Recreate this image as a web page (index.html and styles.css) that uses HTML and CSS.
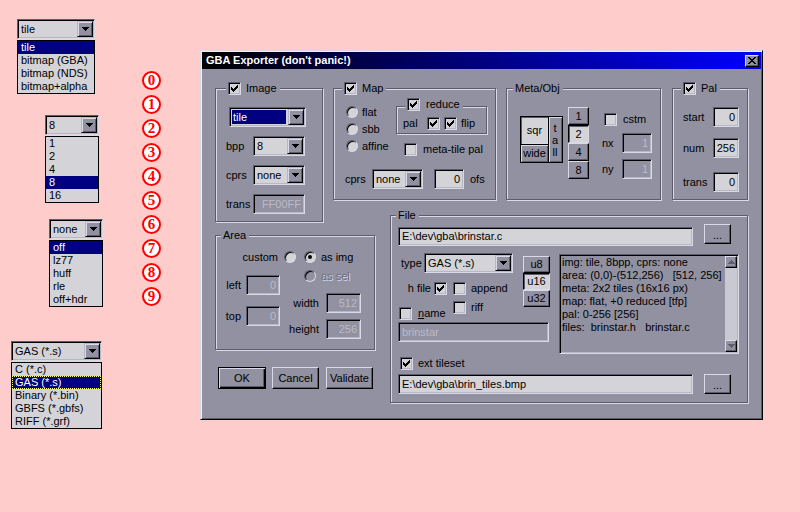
FILE: index.html
```html
<!DOCTYPE html>
<html lang="en">
<head>
<meta charset="utf-8">
<title>GBA Exporter</title>
<link rel="stylesheet" href="styles.css">
</head>
<body>

<div class="pop pop-tile">
  <div class="combo"><span class="cv">tile</span><span class="cbtn"><svg width="7" height="4" viewBox="0 0 7 4"><path d="M0 0h7v1h-1v1h-1v1h-1v1h-1v-1h-1v-1h-1v-1h-1z"/></svg></span></div>
  <ul class="list">
    <li class="sel">tile</li><li>bitmap (GBA)</li><li>bitmap (NDS)</li><li>bitmap+alpha</li>
  </ul>
</div>

<div class="pop pop-bpp">
  <div class="combo"><span class="cv">8</span><span class="cbtn"><svg width="7" height="4" viewBox="0 0 7 4"><path d="M0 0h7v1h-1v1h-1v1h-1v1h-1v-1h-1v-1h-1v-1h-1z"/></svg></span></div>
  <ul class="list">
    <li>1</li><li>2</li><li>4</li><li class="sel">8</li><li>16</li>
  </ul>
</div>

<div class="pop pop-cprs">
  <div class="combo"><span class="cv">none</span><span class="cbtn"><svg width="7" height="4" viewBox="0 0 7 4"><path d="M0 0h7v1h-1v1h-1v1h-1v1h-1v-1h-1v-1h-1v-1h-1z"/></svg></span></div>
  <ul class="list">
    <li class="sel">off</li><li>lz77</li><li>huff</li><li>rle</li><li>off+hdr</li>
  </ul>
</div>

<div class="pop pop-type">
  <div class="combo"><span class="cv">GAS (*.s)</span><span class="cbtn"><svg width="7" height="4" viewBox="0 0 7 4"><path d="M0 0h7v1h-1v1h-1v1h-1v1h-1v-1h-1v-1h-1v-1h-1z"/></svg></span></div>
  <ul class="list">
    <li>C (*.c)</li><li class="sel focus">GAS (*.s)</li><li>Binary (*.bin)</li><li>GBFS (*.gbfs)</li><li>RIFF (*.grf)</li>
  </ul>
</div>

<div class="marks">
  <span class="mark">0</span><span class="mark">1</span><span class="mark">2</span><span class="mark">3</span><span class="mark">4</span>
  <span class="mark">5</span><span class="mark">6</span><span class="mark">7</span><span class="mark">8</span><span class="mark">9</span>
</div>

<div class="dialog">
  <div class="titlebar">
    <span>GBA Exporter (don't panic!)</span>
    <span class="xbtn"><svg width="8" height="7" viewBox="0 0 8 7"><path d="M0 0h2v1h-2zM6 0h2v1h-2zM1 1h2v1h-2zM5 1h2v1h-2zM2 2h4v1h-4zM3 3h2v1h-2zM2 4h4v1h-4zM1 5h2v1h-2zM5 5h2v1h-2zM0 6h2v1h-2zM6 6h2v1h-2z"/></svg></span>
  </div>

  <div class="dbody">

    <section class="group g-image">
      <div class="legend lg-image"><span class="chk"><svg width="11" height="11" viewBox="0 0 11 11"><path d="M8 2h1v1h-1zM7 3h2v1h-2zM2 4h1v1h-1zM6 4h3v1h-3zM2 5h2v1h-2zM5 5h3v1h-3zM2 6h5v1h-5zM3 7h3v1h-3zM4 8h1v1h-1z"/></svg></span><span>Image</span></div>
      <div class="img-body">
        <div class="combo c-tile"><span class="cv hl">tile</span><span class="cbtn"><svg width="7" height="4" viewBox="0 0 7 4"><path d="M0 0h7v1h-1v1h-1v1h-1v1h-1v-1h-1v-1h-1v-1h-1z"/></svg></span></div>
        <span class="lbl">bpp</span>
        <div class="combo"><span class="cv">8</span><span class="cbtn"><svg width="7" height="4" viewBox="0 0 7 4"><path d="M0 0h7v1h-1v1h-1v1h-1v1h-1v-1h-1v-1h-1v-1h-1z"/></svg></span></div>
        <span class="lbl">cprs</span>
        <div class="combo"><span class="cv">none</span><span class="cbtn"><svg width="7" height="4" viewBox="0 0 7 4"><path d="M0 0h7v1h-1v1h-1v1h-1v1h-1v-1h-1v-1h-1v-1h-1z"/></svg></span></div>
        <span class="lbl">trans</span>
        <div class="fld dis">FF00FF</div>
      </div>
    </section>

    <section class="group g-map">
      <div class="legend lg-map"><span class="chk"><svg width="11" height="11" viewBox="0 0 11 11"><path d="M8 2h1v1h-1zM7 3h2v1h-2zM2 4h1v1h-1zM6 4h3v1h-3zM2 5h2v1h-2zM5 5h3v1h-3zM2 6h5v1h-5zM3 7h3v1h-3zM4 8h1v1h-1z"/></svg></span><span>Map</span></div>
      <div class="map-body">
        <div class="radios">
          <div class="ritem"><span class="radio"></span><span>flat</span></div>
          <div class="ritem"><span class="radio"></span><span>sbb</span></div>
          <div class="ritem"><span class="radio"></span><span>affine</span></div>
        </div>
        <div class="map-right">
          <div class="group sub-reduce">
            <div class="legend lg-reduce"><span class="chk"><svg width="11" height="11" viewBox="0 0 11 11"><path d="M8 2h1v1h-1zM7 3h2v1h-2zM2 4h1v1h-1zM6 4h3v1h-3zM2 5h2v1h-2zM5 5h3v1h-3zM2 6h5v1h-5zM3 7h3v1h-3zM4 8h1v1h-1z"/></svg></span><span>reduce</span></div>
            <div class="reduce-body">
              <span class="pal-lbl">pal</span>
              <span class="chk"><svg width="11" height="11" viewBox="0 0 11 11"><path d="M8 2h1v1h-1zM7 3h2v1h-2zM2 4h1v1h-1zM6 4h3v1h-3zM2 5h2v1h-2zM5 5h3v1h-3zM2 6h5v1h-5zM3 7h3v1h-3zM4 8h1v1h-1z"/></svg></span>
              <span class="chk"><svg width="11" height="11" viewBox="0 0 11 11"><path d="M8 2h1v1h-1zM7 3h2v1h-2zM2 4h1v1h-1zM6 4h3v1h-3zM2 5h2v1h-2zM5 5h3v1h-3zM2 6h5v1h-5zM3 7h3v1h-3zM4 8h1v1h-1z"/></svg></span>
              <span>flip</span>
            </div>
          </div>
          <div class="citem mtp"><span class="chk"></span><span>meta-tile pal</span></div>
        </div>
        <div class="map-cprs">
          <span class="lbl">cprs</span>
          <div class="combo"><span class="cv">none</span><span class="cbtn"><svg width="7" height="4" viewBox="0 0 7 4"><path d="M0 0h7v1h-1v1h-1v1h-1v1h-1v-1h-1v-1h-1v-1h-1z"/></svg></span></div>
          <div class="fld ofs">0</div>
          <span class="ofs-lbl">ofs</span>
        </div>
      </div>
    </section>

    <section class="group g-meta">
      <div class="legend lg-meta"><span>Meta/Obj</span></div>
      <div class="meta-body">
        <div class="shape">
          <div class="sh sqr">sqr</div>
          <div class="sh tall"><span>t</span><span>a</span><span>ll</span></div>
          <div class="sh wide">wide</div>
        </div>
        <div class="nums">
          <div class="btn">1</div>
          <div class="btn down">2</div>
          <div class="btn">4</div>
          <div class="btn">8</div>
        </div>
        <div class="meta-right">
          <div class="citem cstm"><span class="chk"></span><span>cstm</span></div>
          <div class="mrow"><span class="lbl">nx</span><div class="fld dis">1</div></div>
          <div class="mrow"><span class="lbl">ny</span><div class="fld dis">1</div></div>
        </div>
      </div>
    </section>

    <section class="group g-pal">
      <div class="legend lg-pal"><span class="chk"><svg width="11" height="11" viewBox="0 0 11 11"><path d="M8 2h1v1h-1zM7 3h2v1h-2zM2 4h1v1h-1zM6 4h3v1h-3zM2 5h2v1h-2zM5 5h3v1h-3zM2 6h5v1h-5zM3 7h3v1h-3zM4 8h1v1h-1z"/></svg></span><span>Pal</span></div>
      <div class="pal-body">
        <div class="prow"><span class="lbl">start</span><div class="fld">0</div></div>
        <div class="prow r2"><span class="lbl">num</span><div class="fld">256</div></div>
        <div class="prow r3"><span class="lbl">trans</span><div class="fld">0</div></div>
      </div>
    </section>

    <section class="group g-area">
      <div class="legend lg-area"><span>Area</span></div>
      <div class="area-body">
        <div class="area-left">
          <span class="custom-lbl">custom</span>
          <div class="arow r-left"><span class="lbl">left</span><div class="fld dis">0</div></div>
          <div class="arow r-top"><span class="lbl">top</span><div class="fld dis">0</div></div>
        </div>
        <div class="area-right">
          <div class="rrow"><span class="radio"></span><span class="radio on"></span><span>as img</span></div>
          <div class="rrow assel"><span class="radio dis"></span><span class="distext">as sel</span></div>
          <div class="arow2 r-width"><span class="lbl">width</span><div class="fld dis">512</div></div>
          <div class="arow2 r-height"><span class="lbl">height</span><div class="fld dis">256</div></div>
        </div>
      </div>
    </section>

    <section class="group g-file">
      <div class="legend lg-file"><span>File</span></div>
      <div class="file-body">
        <div class="frow1">
          <div class="fld path">E:\dev\gba\brinstar.c</div>
          <div class="btn dots">...</div>
        </div>
        <div class="file-mid">
          <div class="file-left">
            <div class="file-top">
              <div class="colA">
                <div class="type-row">
                  <span class="lbl">type</span>
                  <div class="combo"><span class="cv">GAS (*.s)</span><span class="cbtn"><svg width="7" height="4" viewBox="0 0 7 4"><path d="M0 0h7v1h-1v1h-1v1h-1v1h-1v-1h-1v-1h-1v-1h-1z"/></svg></span></div>
                </div>
                <div class="opt-row hrow">
                  <div class="c1"><span>h file</span><span class="chk"><svg width="11" height="11" viewBox="0 0 11 11"><path d="M8 2h1v1h-1zM7 3h2v1h-2zM2 4h1v1h-1zM6 4h3v1h-3zM2 5h2v1h-2zM5 5h3v1h-3zM2 6h5v1h-5zM3 7h3v1h-3zM4 8h1v1h-1z"/></svg></span></div>
                  <div class="citem"><span class="chk"></span><span>append</span></div>
                </div>
                <div class="opt-row nrow">
                  <div class="citem namei"><span class="chk"></span><span><u>n</u>ame</span></div>
                  <div class="citem"><span class="chk"></span><span>riff</span></div>
                </div>
              </div>
              <div class="ubtns">
                <div class="btn">u8</div>
                <div class="btn down">u16</div>
                <div class="btn">u32</div>
              </div>
            </div>
            <div class="fld path dis brin">brinstar</div>
          </div>
          <div class="info">
            <div class="info-text">img: tile, 8bpp, cprs: none
area: (0,0)-(512,256)   [512, 256]
meta: 2x2 tiles (16x16 px)
map: flat, +0 reduced [tfp]
pal: 0-256 [256]
files:  brinstar.h   brinstar.c</div>
            <div class="sbar">
              <div class="sbtn"><svg width="7" height="4" viewBox="0 0 7 4"><path d="M3 0h1v1h1v1h1v1h1v1h-7v-1h1v-1h1v-1h1z"/></svg></div>
              <div class="strack"></div>
              <div class="sbtn"><svg width="7" height="4" viewBox="0 0 7 4"><path d="M0 0h7v1h-1v1h-1v1h-1v1h-1v-1h-1v-1h-1v-1h-1z"/></svg></div>
            </div>
          </div>
        </div>
        <div class="citem ext"><span class="chk"><svg width="11" height="11" viewBox="0 0 11 11"><path d="M8 2h1v1h-1zM7 3h2v1h-2zM2 4h1v1h-1zM6 4h3v1h-3zM2 5h2v1h-2zM5 5h3v1h-3zM2 6h5v1h-5zM3 7h3v1h-3zM4 8h1v1h-1z"/></svg></span><span>ext tileset</span></div>
        <div class="frow1 frow-tiles">
          <div class="fld path">E:\dev\gba\brin_tiles.bmp</div>
          <div class="btn dots">...</div>
        </div>
      </div>
    </section>

    <div class="btnrow">
      <div class="btn def b-ok">OK</div>
      <div class="btn b-cancel">Cancel</div>
      <div class="btn b-val">Validate</div>
    </div>

  </div>
</div>

</body>
</html>
```

FILE: styles.css
```css
:root {
  --face: #9191a1;
  --hi: #dadae6;
  --lt: #b6b6c4;
  --sh: #5c5c6c;
  --field: #d4d4d8;
  --dis: #bbbbc8;
  --sel: #000080;
}

* { box-sizing: border-box; }

html, body { margin: 0; padding: 0; }

body {
  width: 800px;
  height: 512px;
  overflow: hidden;
  position: relative;
  background: #ffcccc;
  font: 11px/13px "Liberation Sans", Arial, sans-serif;
  color: #000;
}

ul { margin: 0; padding: 0; list-style: none; }

/* ---------- common controls ---------- */
.combo {
  display: flex;
  height: 20px;
  padding: 1px;
  background: var(--field);
  border: 1px solid;
  border-color: var(--sh) var(--hi) var(--hi) var(--sh);
  box-shadow: inset 1px 1px #000, inset -1px -1px var(--lt);
}
.cv {
  flex: 1;
  min-width: 0;
  display: flex;
  align-items: center;
  padding-left: 2px;
  white-space: nowrap;
  overflow: hidden;
}
.cv.hl {
  background: var(--sel);
  color: #fff;
  margin: 1px 2px 1px 1px;
  padding-left: 1px;
}
.cbtn {
  width: 16px;
  height: 16px;
  flex: none;
  display: flex;
  align-items: center;
  justify-content: center;
  background: var(--face);
  border: 1px solid;
  border-color: var(--lt) #000 #000 var(--lt);
  box-shadow: inset 1px 1px var(--hi), inset -1px -1px var(--sh);
}
.cbtn svg, .sbtn svg, .xbtn svg, .chk svg { display: block; }

.fld {
  height: 20px;
  display: flex;
  align-items: center;
  justify-content: flex-end;
  padding: 0 3px 0 3px;
  background: var(--field);
  border: 1px solid;
  border-color: var(--sh) var(--hi) var(--hi) var(--sh);
  box-shadow: inset 1px 1px #000, inset -1px -1px var(--lt);
  white-space: nowrap;
  overflow: hidden;
}
.fld.dis { background: var(--face); color: var(--dis); }
.fld.path { justify-content: flex-start; padding-left: 3px; }

.chk {
  width: 13px;
  height: 13px;
  flex: none;
  display: block;
  background: var(--field);
  border: 1px solid;
  border-color: var(--sh) var(--hi) var(--hi) var(--sh);
  box-shadow: inset 1px 1px #000, inset -1px -1px var(--lt);
}

.radio {
  width: 12px;
  height: 12px;
  flex: none;
  border-radius: 50%;
  background: var(--field);
  border: 1px solid;
  border-color: var(--sh) var(--hi) var(--hi) var(--sh);
  box-shadow: inset 1px 1px #000;
  display: flex;
  align-items: center;
  justify-content: center;
}
.radio.on::after {
  content: "";
  width: 4px;
  height: 4px;
  border-radius: 50%;
  background: #000;
}
.radio.dis { background: var(--face); }

.btn {
  display: flex;
  align-items: center;
  justify-content: center;
  background: var(--face);
  border: 1px solid;
  border-color: var(--hi) #000 #000 var(--hi);
  box-shadow: inset -1px -1px var(--sh);
  white-space: nowrap;
}
.btn.down {
  background: var(--field);
  border-color: #000 var(--hi) var(--hi) #000;
  box-shadow: inset 1px 1px var(--sh);
}
.btn.def {
  border-color: #000;
  box-shadow: inset 1px 1px var(--hi), inset -1px -1px #000, inset -2px -2px var(--sh);
}

.citem { display: flex; align-items: center; gap: 5px; white-space: nowrap; }
.lbl { white-space: nowrap; }

/* ---------- floating popups ---------- */
.pop {
  position: absolute;
  display: flex;
  flex-direction: column;
  gap: 1px;
}
.pop-tile { left: 17px; top: 19px; width: 78px; }
.pop-bpp { left: 45px; top: 115px; width: 54px; }
.pop-cprs { left: 49px; top: 219px; width: 54px; }
.pop-type { left: 11px; top: 341px; width: 91px; }

.list {
  border: 1px solid #000;
  background: var(--field);
}
.list li {
  height: 13px;
  line-height: 13px;
  padding-left: 3px;
  white-space: nowrap;
}
.list li.sel { background: var(--sel); color: #fff; }
.list li.focus { outline: 1px dotted #ffff80; outline-offset: -1px; }

.marks {
  position: absolute;
  left: 142px;
  top: 71px;
  display: flex;
  flex-direction: column;
  gap: 5px;
}
.mark {
  width: 19px;
  height: 19px;
  border: 2px solid #ff0000;
  border-radius: 50%;
  background: #fff;
  color: #ff0000;
  font: bold 15px/15px "Liberation Serif", "Times New Roman", serif;
  display: flex;
  align-items: center;
  justify-content: center;
}

/* ---------- dialog window ---------- */
.dialog {
  position: absolute;
  left: 200px;
  top: 50px;
  width: 563px;
  height: 370px;
  padding: 1px;
  background: var(--face);
  border: 1px solid;
  border-color: var(--hi) #000 #000 var(--hi);
  box-shadow: inset 1px 1px #eeeef4, inset -1px -1px var(--sh);
}
.titlebar {
  height: 17px;
  display: flex;
  align-items: center;
  justify-content: space-between;
  padding: 0 2px 0 4px;
  background: linear-gradient(to right, #000000, #0000ff);
  color: #fff;
  font-weight: bold;
  white-space: nowrap;
}
.xbtn {
  width: 14px;
  height: 12px;
  display: flex;
  align-items: center;
  justify-content: center;
  background: var(--face);
  border: 1px solid;
  border-color: var(--hi) #000 #000 var(--hi);
  box-shadow: inset -1px -1px var(--sh);
}

.dbody {
  display: grid;
  padding: 19px 0 0 13px;
  grid-template-columns: 108px 10px 42px 15px 106px 10px 155px 11px 76px;
  grid-template-rows: 112px 15px 7px 13px 115px 17px 22px 14px;
}

.group {
  position: relative;
  border: 1px solid var(--sh);
  box-shadow: inset 1px 1px var(--hi), 1px 1px var(--hi);
}
.legend {
  position: absolute;
  top: -7px;
  height: 13px;
  display: flex;
  align-items: center;
  gap: 5px;
  padding: 0 3px 0 2px;
  background: var(--face);
  white-space: nowrap;
}
.lg-image { left: 10px; }
.lg-map { left: 8px; }
.lg-pal { left: 8px; }
.lg-meta { left: 6px; }
.lg-area { left: 5px; }
.lg-file { left: 5px; }
.lg-reduce { left: 8px; top: -9px; gap: 6px; }

.g-image { grid-column: 1; grid-row: 1 / 4; }
.g-map { grid-column: 3 / 6; grid-row: 1; }
.g-meta { grid-column: 7; grid-row: 1; }
.g-pal { grid-column: 9; grid-row: 1; }
.g-area { grid-column: 1 / 4; grid-row: 5; }
.g-file { grid-column: 5 / 10; grid-row: 3 / 9; }
.btnrow { grid-column: 1 / 4; grid-row: 7; }

/* image */
.img-body {
  display: grid;
  grid-template-columns: 27px 52px;
  grid-auto-rows: 20px;
  row-gap: 9px;
  align-items: center;
  padding: 18px 0 0 10px;
}
.c-tile { grid-column: 1 / 3; margin-left: 3px; width: 77px; }

/* map */
.map-body {
  display: grid;
  grid-template-columns: 50px 91px;
  padding: 17px 0 0 12px;
}
.radios { display: flex; flex-direction: column; gap: 5px; }
.ritem { display: flex; align-items: center; gap: 4px; height: 12px; }
.sub-reduce { height: 28px; }
.reduce-body {
  display: flex;
  align-items: center;
  padding: 10px 0 0 6px;
}
.pal-lbl { width: 24px; }
.reduce-body .chk + .chk { margin-left: 4px; }
.reduce-body .chk + span { margin-left: 4px; }
.mtp { margin: 9px 0 0 8px; gap: 6px; }
.map-cprs {
  grid-column: 1 / 3;
  display: flex;
  align-items: center;
  margin: 13px 0 0 -1px;
}
.map-cprs .lbl { width: 27px; }
.map-cprs .combo { width: 51px; }
.fld.ofs { width: 30px; margin-left: 11px; }
.ofs-lbl { margin-left: 6px; }

/* meta */
.meta-body {
  display: flex;
  align-items: flex-start;
  padding: 18px 0 0 13px;
}
.shape {
  display: grid;
  grid-template-columns: 27px 14px;
  grid-template-rows: 27px 18px;
  border: 1px solid #000;
  margin-top: 9px;
}
.sh {
  display: flex;
  align-items: center;
  justify-content: center;
  background: var(--face);
  box-shadow: inset 1px 1px var(--hi), inset -1px -1px var(--sh);
}
.sqr {
  grid-column: 1;
  grid-row: 1;
  background: var(--field);
  box-shadow: inset 1px 1px var(--sh), inset -1px -1px var(--hi);
}
.tall {
  grid-column: 2;
  grid-row: 1 / 3;
  flex-direction: column;
  line-height: 12px;
  box-shadow: inset 1px 0 #000, inset 2px 1px var(--hi), inset -1px -1px var(--sh);
}
.wide {
  grid-column: 1;
  grid-row: 2;
  box-shadow: inset 0 1px #000, inset 1px 2px var(--hi), inset -1px -1px var(--sh);
}
.nums {
  display: flex;
  flex-direction: column;
  margin-left: 5px;
  width: 21px;
}
.nums .btn { height: 18px; }
.meta-right {
  display: flex;
  flex-direction: column;
  margin-left: 13px;
}
.cstm { margin: 6px 0 0 2px; gap: 6px; }
.mrow {
  display: grid;
  grid-template-columns: 20px 30px;
  align-items: center;
  margin-top: 7px;
}
.mrow + .mrow { margin-top: 6px; }

/* pal */
.pal-body { padding: 18px 0 0 10px; }
.prow {
  display: grid;
  grid-template-columns: 30px 26px;
  align-items: center;
}
.prow.r2 { margin-top: 11px; }
.prow.r3 { margin-top: 14px; }

/* area */
.area-body {
  display: flex;
  padding: 15px 0 0 9px;
}
.area-left {
  width: 59px;
  display: flex;
  flex-direction: column;
}
.custom-lbl {
  height: 12px;
  line-height: 12px;
  text-align: right;
  padding-right: 6px;
}
.arow {
  display: grid;
  grid-template-columns: 21px 34px;
  align-items: center;
}
.arow .lbl { text-align: right; padding-right: 5px; }
.r-left { margin-top: 12px; }
.r-top { margin-top: 11px; }
.area-right { display: flex; flex-direction: column; }
.rrow { display: flex; align-items: center; height: 12px; }
.rrow .radio + .radio { margin-left: 8px; }
.rrow .radio + span { margin-left: 5px; }
.assel { margin-top: 7px; padding-left: 20px; }
.distext { color: #6e6e7e; text-shadow: 1px 1px var(--hi); }
.arow2 {
  display: grid;
  grid-template-columns: 42px 35px;
  align-items: center;
}
.arow2 .lbl { text-align: right; padding-right: 7px; }
.r-width { margin-top: 11px; }
.r-height { margin-top: 6px; }

/* file */
.file-body { padding: 8px 0 0 7px; }
.frow1 { display: flex; align-items: flex-start; }
.frow1 .fld { width: 295px; height: 19px; margin-top: 3px; }
.dots { width: 27px; height: 20px; margin-left: 11px; padding-top: 2px; }
.file-mid {
  display: grid;
  grid-template-columns: 161px 180px;
  margin-top: 7px;
}
.file-top { display: flex; align-items: flex-start; }
.colA { width: 125px; display: flex; flex-direction: column; }
.type-row { display: flex; align-items: center; }
.type-row .lbl { width: 26px; padding-left: 3px; }
.type-row .combo { width: 89px; }
.opt-row {
  display: grid;
  grid-template-columns: 55px auto;
  align-items: start;
}
.hrow { margin-top: 9px; }
.hrow .c1 {
  display: flex;
  align-items: center;
  justify-content: flex-end;
  gap: 3px;
  padding-right: 6px;
  white-space: nowrap;
}
.nrow { margin-top: 6px; }
.namei { margin: 6px 0 0 1px; gap: 6px; }
.ubtns { display: flex; flex-direction: column; width: 27px; margin-top: 3px; }
.ubtns .btn { height: 17px; }
.fld.brin { width: 151px; margin-top: 2px; }
.info {
  height: 100px;
  margin-top: 1px;
  display: flex;
  padding: 1px;
  background: var(--face);
  border: 1px solid;
  border-color: var(--sh) var(--hi) var(--hi) var(--sh);
  box-shadow: inset 1px 1px #000, inset -1px -1px var(--lt);
}
.info-text {
  flex: 1;
  white-space: pre;
  overflow: hidden;
  line-height: 13px;
  padding-left: 1px;
}
.sbar {
  width: 12px;
  display: flex;
  flex-direction: column;
  background: #c9c9d3;
}
.sbtn {
  height: 12px;
  display: flex;
  align-items: center;
  justify-content: center;
  background: var(--face);
  border: 1px solid;
  border-color: var(--hi) #000 #000 var(--hi);
  box-shadow: inset -1px -1px var(--sh);
  fill: #5e5e6c;
}
.strack { flex: 1; }
.ext { margin: 3px 0 0 2px; gap: 5px; }
.frow-tiles { margin-top: 4px; }
.frow-tiles .fld { margin-top: 0; height: 20px; }

/* buttons */
.btnrow { display: flex; padding-left: 3px; }
.btnrow .btn { height: 22px; }
.b-ok { width: 48px; }
.b-cancel { width: 47px; margin-left: 6px; }
.b-val { width: 47px; margin-left: 7px; }
```
